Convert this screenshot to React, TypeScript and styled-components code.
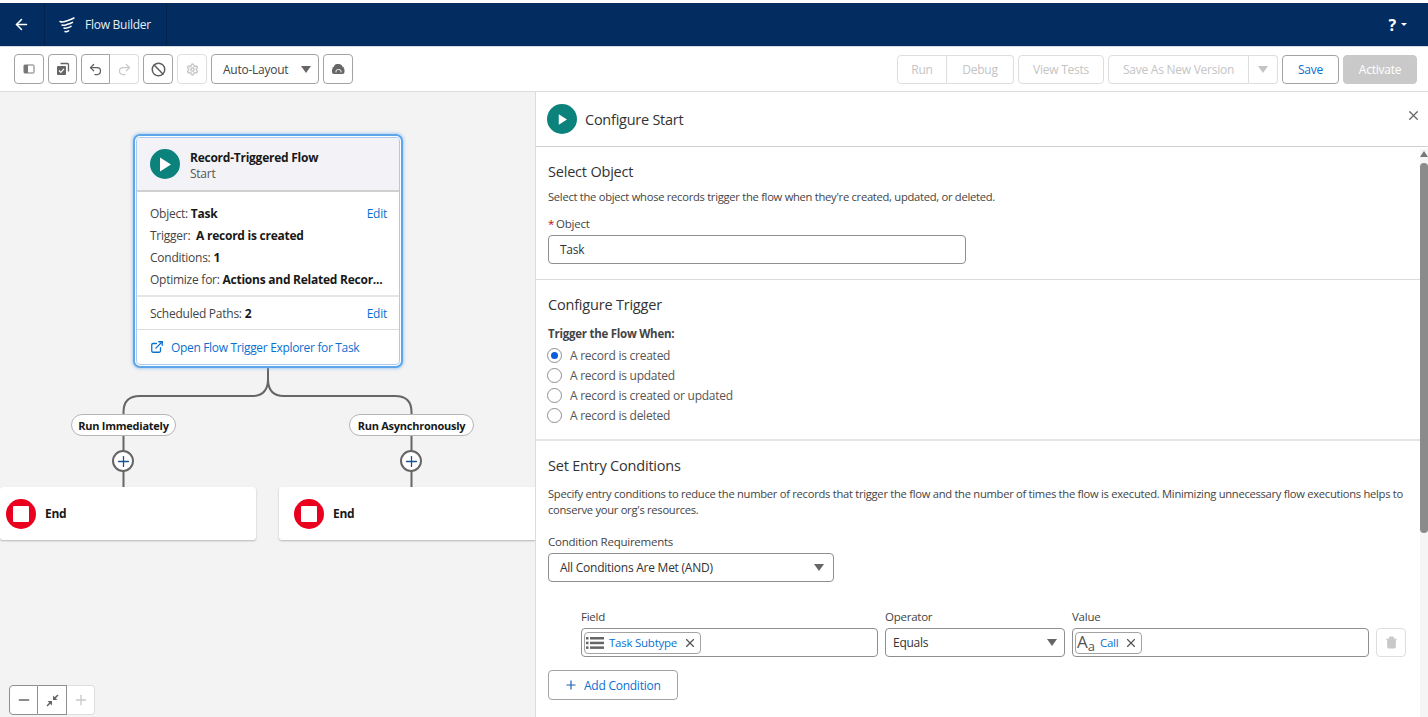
import React from 'react';
import styled, { createGlobalStyle } from 'styled-components';
import { ArrowLeft, Undo2, Redo2, Ban, Settings, X, Plus, Minus, Trash2, ExternalLink } from 'lucide-react';

const Global = createGlobalStyle`
  html, body { margin: 0; padding: 0; background: #fff; }
  body { font-family: "Open Sans", "Noto Sans", sans-serif; font-size: 12px; color: #444; }
  * { box-sizing: border-box; }
`;

const Page = styled.div`
  width: 1428px; height: 717px; overflow: hidden; padding-top: 3px;
  display: flex; flex-direction: column; position: relative; background: #fff;
  letter-spacing: -0.25px;
`;
const Nav = styled.header`
  height: 43px; flex: none; background: #032d60; display: flex; align-items: center; color: #fff;
`;
const NavCell = styled.div<{ $w: number }>`
  width: ${p => p.$w}px; height: 100%; display: flex; align-items: center; gap: 10px;
  padding-left: ${p => (p.$w > 100 ? 14 : 13)}px; border-right: 1px solid #01234c; font-size: 12px; color: #e8eef5;
`;
const NavHelp = styled.div`
  margin-left: auto; margin-right: 21px; display: flex; align-items: center; gap: 5px; font-weight: 700; font-size: 16px;
`;
const Caret = styled.span`
  width: 0; height: 0; border-left: 3px solid transparent; border-right: 3px solid transparent; border-top: 3px solid #fff;
`;
const Toolbar = styled.div`
  height: 46px; flex: none; display: flex; align-items: center; gap: 4px; padding: 0 11px 0 14px;
  border-top: 1px solid #d5d9e0; border-bottom: 1px solid #dcdcdc; background: #fff;
`;
const ToolBtn = styled.button<{ $off?: boolean; $w?: number }>`
  width: ${p => p.$w ?? 29}px; height: 30px; padding: 0; background: #fff; display: flex; align-items: center; justify-content: center;
  border: 1px solid ${p => (p.$off ? '#dedede' : '#a3a3a3')}; border-radius: 4px; color: ${p => (p.$off ? '#c9c9c9' : '#5f5f5f')};
`;
const Group = styled.div`display: flex;`;
const GroupBtn = styled(ToolBtn)<{ $pos: 'l' | 'r' }>`
  width: 29px;
  border-radius: ${p => (p.$pos === 'l' ? '4px 0 0 4px' : '0 4px 4px 0')};
  ${p => p.$pos === 'r' && 'border-left: none;'}
`;
const LayoutSelect = styled.button`
  width: 108px; height: 30px; background: #fff; border: 1px solid #a3a3a3; border-radius: 4px; display: flex;
  align-items: center; justify-content: space-between; padding: 0 7px 0 11px; font: inherit; color: #444; letter-spacing: inherit;
`;
const Tri = styled.span<{ $c?: string }>`
  width: 0; height: 0; border-left: 5.5px solid transparent; border-right: 5.5px solid transparent;
  border-top: 7px solid ${p => p.$c ?? '#666'};
`;
const Spacer = styled.div`flex: 1;`;
const TextBtn = styled.button<{ $w: number; $kind?: 'off' | 'on' | 'fill'; $pos?: 'l' | 'r' }>`
  width: ${p => p.$w}px; height: 29px; padding: 0; font: inherit; letter-spacing: inherit; display: flex; align-items: center; justify-content: center;
  background: ${p => (p.$kind === 'fill' ? '#c9c9c9' : '#fff')};
  color: ${p => (p.$kind === 'on' ? '#0b6fd0' : p.$kind === 'fill' ? '#fff' : '#c4c4c4')};
  border: 1px solid ${p => (p.$kind === 'on' ? '#a3a3a3' : p.$kind === 'fill' ? '#c9c9c9' : '#dedede')};
  border-radius: ${p => (p.$pos === 'l' ? '4px 0 0 4px' : p.$pos === 'r' ? '0 4px 4px 0' : '4px')};
  ${p => p.$pos === 'r' && 'border-left: none;'}
`;
const Body = styled.div`flex: 1; display: flex; min-height: 0;`;
const Canvas = styled.div`
  width: 536px; flex: none; position: relative; overflow: hidden; background: #f3f3f3; border-right: 1px solid #dcdcdc;
`;
const Connectors = styled.svg`position: absolute; left: 0; top: 0;`;
const StartCard = styled.div`
  position: absolute; left: 133px; top: 42px; width: 270px; height: 234px; background: #fff; border: 2px solid #5ea6ec;
  border-radius: 7px; box-shadow: 0 0 3px 1px rgba(120,180,240,.55);
  padding: 1px; display: flex; flex-direction: column; color: #444;
`;
const CardInner = styled.div`
  flex: 1; border: 1px solid #a9cbee; border-radius: 4px; display: flex; flex-direction: column; overflow: hidden;
`;
const CardHead = styled.div`
  height: 54px; flex: none; background: #f3f3f7; border-bottom: 2px solid #d0d0d0; display: flex; align-items: center; gap: 10px; padding-left: 13px;
`;
const PlayCircle = styled.div<{ $size: number }>`
  width: ${p => p.$size}px; height: ${p => p.$size}px; border-radius: 50%; background: #0b827c; flex: none; display: flex; align-items: center; justify-content: center;
`;
const Titles = styled.div`display: flex; flex-direction: column; gap: 2px; line-height: 14px; padding-top: 4px;`;
const NodeTitle = styled.div`font-weight: 700; color: #181818; font-size: 12px;`;
const Sub = styled.div`color: #555;`;
const CardRows = styled.div`
  padding: 10px 12px 5px 13px; border-bottom: 2px solid #e5e5e5; display: flex; flex-direction: column;
`;
const CardRow = styled.div`
  height: 22px; display: flex; align-items: center; justify-content: space-between; white-space: nowrap;
  b { color: #181818; font-weight: 700; }
`;
const Link = styled.a`color: #0b6fd0; text-decoration: none;`;
const PathRow = styled.div`
  height: 33px; flex: none; display: flex; align-items: center; justify-content: space-between; padding: 0 12px 0 13px; border-bottom: 1px solid #dcdcdc;
  b { color: #181818; font-weight: 700; }
`;
const ExplorerRow = styled.div`
  flex: 1; display: flex; align-items: center; gap: 7px; padding-left: 13px; color: #0b6fd0; letter-spacing: -0.33px;
`;
const Pill = styled.div<{ $l: number; $w: number }>`
  position: absolute; left: ${p => p.$l}px; top: 322px; width: ${p => p.$w}px; height: 22px; background: #fff;
  border: 1px solid #b5b5b5; border-radius: 11px; display: flex; align-items: center; justify-content: center;
  font-weight: 700; font-size: 11px; color: #181818; white-space: nowrap;
`;
const PlusNode = styled.div<{ $l: number }>`
  position: absolute; left: ${p => p.$l}px; top: 358px; width: 22px; height: 22px; border-radius: 50%; background: #fff;
  border: 2px solid #666; display: flex; align-items: center; justify-content: center; color: #1b4f8f;
`;
const EndCard = styled.div<{ $l: number; $w: number; $pad: number }>`
  position: absolute; left: ${p => p.$l}px; top: 395px; width: ${p => p.$w}px; height: 53px; background: #fff; border-radius: 3px;
  box-shadow: 0 1px 2px rgba(0,0,0,.25); display: flex; align-items: center; gap: 9px; padding-left: ${p => p.$pad}px;
  font-weight: 700; color: #181818;
`;
const StopCircle = styled.div`
  width: 30px; height: 30px; border-radius: 50%; background: #ea001e; display: flex; align-items: center; justify-content: center; flex: none;
  &::after { content: ''; width: 16px; height: 16px; background: #fff; border-radius: 1px; }
`;
const ZoomBar = styled.div`
  position: absolute; left: 9px; top: 593px; display: flex; height: 30px; background: #fff; border-radius: 4px;
`;
const ZoomBtn = styled.div<{ $pos: 'l' | 'm' | 'r' }>`
  width: ${p => (p.$pos === 'r' ? 28 : 29)}px; height: 30px; display: flex; align-items: center; justify-content: center; background: #fff;
  border: 1px solid ${p => (p.$pos === 'r' ? '#dedede' : '#8f8f8f')}; color: ${p => (p.$pos === 'r' ? '#c9c9c9' : '#666')};
  ${p => p.$pos !== 'l' && 'border-left: none;'}
  border-radius: ${p => (p.$pos === 'l' ? '4px 0 0 4px' : p.$pos === 'r' ? '0 4px 4px 0' : '0')};
`;
const Panel = styled.div`flex: 1; position: relative; overflow: hidden; background: #fff; display: flex; flex-direction: column;`;
const PanelHead = styled.div`
  height: 55px; flex: none; display: flex; align-items: center; gap: 8px; padding: 0 7px 0 11px; border-bottom: 1px solid #d0d0d0;
  font-size: 14.5px; color: #333;
`;
const Close = styled.div`margin-left: auto; margin-bottom: 8px; color: #666; display: flex;`;
const Section = styled.section<{ $pb: number; $pt: number; $line: 'thin' | 'thick' | 'none' }>`
  padding: ${p => p.$pt}px 8px ${p => p.$pb}px 12px; margin-right: 8px;
  border-bottom: ${p => (p.$line === 'thick' ? '2px solid #e5e5e5' : p.$line === 'thin' ? '1px solid #dcdcdc' : 'none')};
`;
const SectionTitle = styled.h2`margin: 0; font-size: 14.5px; font-weight: 400; color: #333; line-height: 20px; letter-spacing: -0.2px;`;
const Help = styled.p<{ $mt: number }>`margin: ${p => p.$mt}px 0 0; line-height: 16px; color: #444; font-size: 11.2px; letter-spacing: -0.28px;`;
const Label = styled.div<{ $mt: number }>`margin-top: ${p => p.$mt}px; line-height: 14px; font-size: 11.5px; color: #444; i { color: #ba0517; font-style: normal; margin-right: 2px; }`;
const Input = styled.div<{ $w: number }>`
  width: ${p => p.$w}px; height: 29px; margin-top: 4px; border: 1px solid #8f8f8f; border-radius: 4px; display: flex; align-items: center;
  justify-content: space-between; padding: 0 9px 0 11px; color: #333; background: #fff;
`;
const Legend = styled.div`margin-top: 11px; font-weight: 700; font-size: 11.5px; line-height: 16px; color: #444;`;
const Radios = styled.div`margin-top: 3px; display: flex; flex-direction: column;`;
const RadioRow = styled.label`height: 20px; display: flex; align-items: center; gap: 8px; color: #555; margin-left: -1px;`;
const RadioDot = styled.span<{ $on?: boolean }>`
  width: 15px; height: 15px; border-radius: 50%; border: 1px solid #8f8f8f; display: flex; align-items: center; justify-content: center; background: #fff;
  &::after { content: ''; width: 7px; height: 7px; border-radius: 50%; background: ${p => (p.$on ? '#0b5cd8' : 'transparent')}; }
`;
const CondGrid = styled.div`
  margin: 28px 0 0 33px; display: grid; grid-template-columns: 297px 180px 297px 30px; column-gap: 7px; width: 840px; font-size: 11.5px;
`;
const Col = styled.div`display: flex; flex-direction: column; gap: 4px; line-height: 14px;`;
const ComboBox = styled.div`
  height: 29px; border: 1px solid #8f8f8f; border-radius: 4px; display: flex; align-items: center; padding-left: 2px; background: #fff;
`;
const OpBox = styled(ComboBox)`justify-content: space-between; padding: 0 7px 0 7px; font-size: 12px; color: #333;`;
const Chip = styled.div`
  height: 22px; border: 1px solid #a3a3a3; border-radius: 4px; display: flex; align-items: center; gap: 4px; padding: 0 3px 0 1px; color: #0b6fd0; font-size: 11.5px;
`;
const ChipType = styled.span`color: #555; font-size: 17px; line-height: 20px; display: flex; align-items: baseline; letter-spacing: 0; margin-right: 1px;
  small { font-size: 13px; position: relative; top: 3px; }
`;
const ChipX = styled.span`display: flex; color: #555; margin-left: 2px;`;
const TrashBtn = styled.div`
  align-self: end; width: 30px; height: 29px; border: 1px solid #dedede; border-radius: 4px; display: flex; align-items: center; justify-content: center; color: #c9c9c9;
`;
const AddBtn = styled.div`
  margin-top: 13px; width: 130px; height: 30px; border: 1px solid #a3a3a3; border-radius: 4px; display: flex; align-items: center; gap: 6px; padding-left: 15px; color: #0b6fd0;
`;
const ScrollTrack = styled.div`
  position: absolute; right: 0; top: 57px; bottom: 0; width: 8px; background: #f5f5f5;
`;
const ScrollThumb = styled.div`
  position: absolute; left: 0; top: 14px; width: 8px; height: 370px; border-radius: 4px; background: #8b8b8b;
`;
const ScrollUp = styled.div`
  position: absolute; left: 0; top: 2px; width: 0; height: 0; border-left: 4px solid transparent; border-right: 4px solid transparent; border-bottom: 6px solid #777;
`;

const FlowLogo = () => (
  <svg width="16" height="16" viewBox="0 0 16 16" fill="none" stroke="#fff" strokeWidth="1.5" strokeLinecap="round">
    <path d="M1 4.500c3 1.300 5-.2 7-.8 2-.6 4-1 7-2.700" />
    <path d="M3 8c2.500 1 4-.3 5.500-.7 1.500-.4 3-.8 5-2" />
    <path d="M5 11c2 .8 3-.3 4.300-.5 1-.2 1.700-.5 2.700-1.200" />
    <path d="M6 14.500c1.500.5 2.400 0 3.600-.7" />
  </svg>
);
const PanelIcon = () => (
  <svg width="12" height="12" viewBox="0 0 12 12"><rect x="1" y="2" width="10" height="8" rx=".8" fill="none" stroke="#777" strokeWidth="1" /><rect x="1" y="2" width="4" height="8" fill="#777" /></svg>
);
const CopyCheckIcon = () => (
  <svg width="14" height="14" viewBox="0 0 14 14"><path d="M4.500 1.500h7a1 1 0 0 1 1 1v7" fill="none" stroke="#666" strokeWidth="1.3" /><rect x="1" y="4" width="9" height="9" rx="1" fill="#666" /><path d="M3 8.500l1.800 1.800L8 6.800" fill="none" stroke="#fff" strokeWidth="1.200" /></svg>
);
const RobotIcon = () => (
  <svg width="13" height="10" viewBox="0 0 13 10"><path d="M6.500 0a4.500 4.500 0 0 1 4.400 3.600l.3-.6 1 .6-.5 1c.5.300.8.800.8 1.400V8a2 2 0 0 1-2 2H2a2 2 0 0 1-2-2V6c0-.6.300-1.100.8-1.400l-.5-1 1-.6.300.6A4.500 4.500 0 0 1 6.500 0z" fill="#666" /><path d="M4 8.500V7a2.500 1.500 0 0 1 5 0v1.500" fill="none" stroke="#fff" strokeWidth=".9" /></svg>
);
const ListIcon = () => (
  <svg width="19" height="14" viewBox="0 0 19 14" fill="#666"><rect x="0" y="1" width="2.500" height="2.500" /><rect x="4" y="1" width="14" height="2.500" /><rect x="0" y="5.700" width="2.500" height="2.500" /><rect x="4" y="5.700" width="14" height="2.500" /><rect x="0" y="10.400" width="2.500" height="2.500" /><rect x="4" y="10.400" width="14" height="2.500" /></svg>
);
const FitIcon = () => (
  <svg width="13" height="13" viewBox="0 0 13 13" fill="#666"><path d="M12 1L8.600 4.400" stroke="#666" strokeWidth="1.500" /><path d="M7 1.500V6h4.500z" /><path d="M1 12l3.400-3.400" stroke="#666" strokeWidth="1.500" /><path d="M6 7H1.500L6 11.500z" /></svg>
);
const PlayTri = ({ w, h }: { w: number; h: number }) => (
  <svg width={w} height={h} viewBox="0 0 12 14"><path d="M1 0L12 7L1 14z" fill="#fff" /></svg>
);

export default function App() {
  return (
    <Page>
      <Global />
      <Nav>
        <NavCell $w={45}><ArrowLeft size={17} strokeWidth={2.2} color="#fff" /></NavCell>
        <NavCell $w={122}><FlowLogo /><span>Flow Builder</span></NavCell>
        <NavHelp>?<Caret /></NavHelp>
      </Nav>
      <Toolbar>
        <ToolBtn $w={30}><PanelIcon /></ToolBtn>
        <ToolBtn><CopyCheckIcon /></ToolBtn>
        <Group>
          <GroupBtn $pos="l"><Undo2 size={15} /></GroupBtn>
          <GroupBtn $pos="r" $off><Redo2 size={15} /></GroupBtn>
        </Group>
        <ToolBtn $w={30}><Ban size={15} strokeWidth={2.4} /></ToolBtn>
        <ToolBtn $w={30} $off><Settings size={13} strokeWidth={2.8} /></ToolBtn>
        <LayoutSelect>Auto-Layout<Tri /></LayoutSelect>
        <ToolBtn $w={30}><RobotIcon /></ToolBtn>
        <Spacer />
        <Group>
          <TextBtn $w={50} $pos="l">Run</TextBtn>
          <TextBtn $w={67} $pos="r">Debug</TextBtn>
        </Group>
        <TextBtn $w={86}>View Tests</TextBtn>
        <Group>
          <TextBtn $w={141} $pos="l">Save As New Version</TextBtn>
          <TextBtn $w={29} $pos="r"><Tri $c="#c4c4c4" /></TextBtn>
        </Group>
        <TextBtn $w={57} $kind="on">Save</TextBtn>
        <TextBtn $w={74} $kind="fill">Activate</TextBtn>
      </Toolbar>
      <Body>
        <Canvas>
          <Connectors width="536" height="400" fill="none" stroke="#666" strokeWidth="2">
            <path d="M268 270V287Q268 304 252 304H140Q123.500 304 123.500 320V395" />
            <path d="M268 287Q268 304 284 304H395Q411.500 304 411.500 320V395" />
          </Connectors>
          <StartCard>
            <CardInner>
              <CardHead>
                <PlayCircle $size={30}><PlayTri w={12} h={15} /></PlayCircle>
                <Titles><NodeTitle>Record-Triggered Flow</NodeTitle><Sub>Start</Sub></Titles>
              </CardHead>
              <CardRows>
                <CardRow><span>Object: <b>Task</b></span><Link>Edit</Link></CardRow>
                <CardRow><span>Trigger:&nbsp; <b>A record is created</b></span></CardRow>
                <CardRow><span>Conditions: <b>1</b></span></CardRow>
                <CardRow><span>Optimize for: <b>Actions and Related Recor...</b></span></CardRow>
              </CardRows>
              <PathRow><span>Scheduled Paths: <b>2</b></span><Link>Edit</Link></PathRow>
              <ExplorerRow><ExternalLink size={14} strokeWidth={2.2} />Open Flow Trigger Explorer for Task</ExplorerRow>
            </CardInner>
          </StartCard>
          <Pill $l={71} $w={105}>Run Immediately</Pill>
          <Pill $l={349} $w={125}>Run Asynchronously</Pill>
          <PlusNode $l={112}><Plus size={17} strokeWidth={1.8} /></PlusNode>
          <PlusNode $l={400}><Plus size={17} strokeWidth={1.8} /></PlusNode>
          <EndCard $l={0} $w={256} $pad={6}><StopCircle />End</EndCard>
          <EndCard $l={279} $w={270} $pad={15}><StopCircle />End</EndCard>
          <ZoomBar>
            <ZoomBtn $pos="l"><Minus size={16} /></ZoomBtn>
            <ZoomBtn $pos="m"><FitIcon /></ZoomBtn>
            <ZoomBtn $pos="r"><Plus size={16} /></ZoomBtn>
          </ZoomBar>
        </Canvas>
        <Panel>
          <PanelHead>
            <PlayCircle $size={30}><PlayTri w={9} h={11} /></PlayCircle>
            <span>Configure Start</span>
            <Close><X size={15} /></Close>
          </PanelHead>
          <Section $pt={15} $pb={15} $line="thin">
            <SectionTitle>Select Object</SectionTitle>
            <Help $mt={7}>Select the object whose records trigger the flow when they're created, updated, or deleted.</Help>
            <Label $mt={12}><i>*</i>Object</Label>
            <Input $w={418}>Task</Input>
          </Section>
          <Section $pt={15} $pb={14} $line="thick">
            <SectionTitle>Configure Trigger</SectionTitle>
            <Legend>Trigger the Flow When:</Legend>
            <Radios>
              <RadioRow><RadioDot $on />A record is created</RadioRow>
              <RadioRow><RadioDot />A record is updated</RadioRow>
              <RadioRow><RadioDot />A record is created or updated</RadioRow>
              <RadioRow><RadioDot />A record is deleted</RadioRow>
            </Radios>
          </Section>
          <Section $pt={15} $pb={0} $line="none">
            <SectionTitle>Set Entry Conditions</SectionTitle>
            <Help $mt={10}>Specify entry conditions to reduce the number of records that trigger the flow and the number of times the flow is executed. Minimizing unnecessary flow executions helps to conserve your org's resources.</Help>
            <Label $mt={17}>Condition Requirements</Label>
            <Input $w={286}>All Conditions Are Met (AND)<Tri /></Input>
            <CondGrid>
              <Col>Field<ComboBox><Chip><ListIcon />Task Subtype<ChipX><X size={14} /></ChipX></Chip></ComboBox></Col>
              <Col>Operator<OpBox>Equals<Tri /></OpBox></Col>
              <Col>Value<ComboBox><Chip><ChipType>A<small>a</small></ChipType>Call<ChipX><X size={14} /></ChipX></Chip></ComboBox></Col>
              <TrashBtn><Trash2 size={13} fill="#c9c9c9" /></TrashBtn>
            </CondGrid>
            <AddBtn><Plus size={14} strokeWidth={2} color="#1b5fb0" />Add Condition</AddBtn>
          </Section>
          <ScrollTrack><ScrollUp /><ScrollThumb /></ScrollTrack>
        </Panel>
      </Body>
    </Page>
  );
}
